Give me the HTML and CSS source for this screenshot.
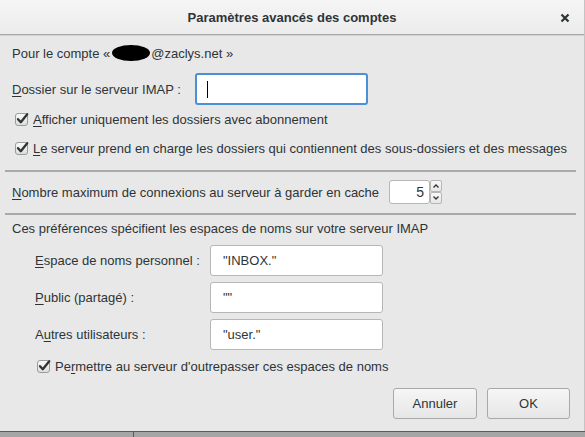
FILE: index.html
```html
<!DOCTYPE html>
<html lang="fr">
<head>
<meta charset="utf-8">
<title>Paramètres avancés des comptes</title>
<link rel="stylesheet" href="styles.css">
</head>
<body>
<div class="window">
  <div class="dialog">
    <header class="titlebar">
      <span class="title">Paramètres avancés des comptes</span>
      <button class="close" aria-label="Fermer">
        <svg width="10" height="10" viewBox="0 0 10 10"><path d="M1.5 1.5 L8.5 8.5 M8.5 1.5 L1.5 8.5" stroke="#2e3436" stroke-width="2.2" fill="none"/></svg>
      </button>
    </header>

    <main class="content">
      <div class="row account">Pour le compte «<span class="redacted"></span>@zaclys.net »</div>

      <div class="row server-dir">
        <label class="label"><u>D</u>ossier sur le serveur IMAP :</label>
        <div class="entry focused"><span class="caret"></span></div>
      </div>

      <label class="check-row first">
        <svg class="check" width="16" height="16" viewBox="0 0 16 16"><defs><linearGradient id="cb1" x1="0" y1="0" x2="0" y2="1"><stop offset="0" stop-color="#fafafa"/><stop offset="1" stop-color="#dcdcdc"/></linearGradient></defs><rect x="1.5" y="2.5" width="12" height="12" rx="2.5" fill="url(#cb1)" stroke="#9b9b9b"/><path d="M4 8.2 L6.8 11.2 L13.2 3.2" stroke="#2e3436" stroke-width="2.3" fill="none" stroke-linecap="round" stroke-linejoin="round"/></svg>
        <span><u>A</u>fficher uniquement les dossiers avec abonnement</span>
      </label>

      <label class="check-row second">
        <svg class="check" width="16" height="16" viewBox="0 0 16 16"><defs><linearGradient id="cb2" x1="0" y1="0" x2="0" y2="1"><stop offset="0" stop-color="#fafafa"/><stop offset="1" stop-color="#dcdcdc"/></linearGradient></defs><rect x="1.5" y="2.5" width="12" height="12" rx="2.5" fill="url(#cb2)" stroke="#9b9b9b"/><path d="M4 8.2 L6.8 11.2 L13.2 3.2" stroke="#2e3436" stroke-width="2.3" fill="none" stroke-linecap="round" stroke-linejoin="round"/></svg>
        <span><u>L</u>e serveur prend en charge les dossiers qui contiennent des sous-dossiers et des messages</span>
      </label>

      <hr class="separator sep1">

      <div class="row cache">
        <label class="label"><u>N</u>ombre maximum de connexions au serveur à garder en cache</label>
        <div class="spin">
          <div class="spin-value">5</div>
          <div class="spin-arrows">
            <span class="arrow"><svg width="8" height="6" viewBox="0 0 8 6"><path d="M1.5 4.5 L4 2 L6.5 4.5" stroke="#2e3436" stroke-width="1.3" fill="none"/></svg></span>
            <span class="arrow"><svg width="8" height="6" viewBox="0 0 8 6"><path d="M1.5 1.5 L4 4 L6.5 1.5" stroke="#2e3436" stroke-width="1.3" fill="none"/></svg></span>
          </div>
        </div>
      </div>

      <hr class="separator sep2">

      <div class="row intro">Ces préférences spécifient les espaces de noms sur votre serveur IMAP</div>

      <div class="namespaces">
        <div class="ns-row">
          <label class="ns-label"><u>E</u>space de noms personnel :</label>
          <div class="entry ns-entry">"INBOX."</div>
        </div>
        <div class="ns-row">
          <label class="ns-label"><u>P</u>ublic (partagé) :</label>
          <div class="entry ns-entry">""</div>
        </div>
        <div class="ns-row">
          <label class="ns-label">A<u>u</u>tres utilisateurs :</label>
          <div class="entry ns-entry">"user."</div>
        </div>
      </div>

      <label class="check-row third">
        <svg class="check" width="16" height="16" viewBox="0 0 16 16"><defs><linearGradient id="cb3" x1="0" y1="0" x2="0" y2="1"><stop offset="0" stop-color="#fafafa"/><stop offset="1" stop-color="#dcdcdc"/></linearGradient></defs><rect x="1.5" y="2.5" width="12" height="12" rx="2.5" fill="url(#cb3)" stroke="#9b9b9b"/><path d="M4 8.2 L6.8 11.2 L13.2 3.2" stroke="#2e3436" stroke-width="2.3" fill="none" stroke-linecap="round" stroke-linejoin="round"/></svg>
        <span>Pe<u>r</u>mettre au serveur d'outrepasser ces espaces de noms</span>
      </label>

      <div class="buttons">
        <button class="btn">Annuler</button>
        <button class="btn">OK</button>
      </div>
    </main>
  </div>
  <div class="taskbar">
    <div class="pane left"></div>
    <div class="pane right"></div>
  </div>
</div>
</body>
</html>
```

FILE: styles.css
```css
* { box-sizing: border-box; }

html, body {
  margin: 0;
  padding: 0;
  background: #a6a6a6;
}

body {
  font-family: "Liberation Sans", Arial, sans-serif;
  font-size: 13px;
  color: #2e3436;
}

.window {
  width: 585px;
  height: 437px;
  display: flex;
  flex-direction: column;
}

.dialog {
  height: 431px;
  background: #e8e8e8;
  border-right: 1px solid #c4c4c4;
  display: flex;
  flex-direction: column;
}

/* title bar */
.titlebar {
  height: 35px;
  flex: none;
  display: flex;
  align-items: center;
  justify-content: center;
  position: relative;
  background: linear-gradient(#f5f5f5, #ececec);
  border-bottom: 1px solid #a9a9a9;
  box-shadow: 0 1px 0 #d2d2d2;
}

.title {
  font-weight: bold;
  font-size: 13px;
  padding-top: 1px;
}

.close {
  position: absolute;
  right: 13px;
  top: 12px;
  width: 12px;
  height: 12px;
  padding: 0;
  border: 0;
  background: none;
  display: flex;
  align-items: center;
  justify-content: center;
}

/* body */
.content {
  flex: 1;
  display: flex;
  flex-direction: column;
  padding: 0 0 0 12px;
}

.row {
  display: flex;
  align-items: center;
}

.account {
  height: 24px;
  margin-top: 6px;
}

.redacted {
  display: inline-block;
  width: 38px;
  height: 16px;
  background: #000;
  border-radius: 50%;
  margin: 0 1px 0 2px;
}

.server-dir {
  height: 32px;
  margin-top: 8px;
}

.label u, .ns-label u, .check-row u {
  text-decoration-thickness: 1px;
  text-underline-offset: 2px;
}

.entry {
  background: #fff;
  border: 1px solid #b6b6b6;
  border-radius: 3px;
  display: flex;
  align-items: center;
}

.server-dir .entry {
  margin-left: 14px;
  width: 173px;
  height: 32px;
  padding-left: 11px;
}

.entry.focused {
  border: 2px solid #4a90d9;
  padding-left: 10px;
}

.caret {
  width: 1px;
  height: 17px;
  background: #000;
}

.check-row {
  display: flex;
  align-items: center;
  height: 20px;
}

.check-row .check {
  flex: none;
  margin-right: 3px;
}

.check-row.first { margin-top: 4px; padding-left: 2px; }
.check-row.second { margin-top: 9px; padding-left: 2px; }

.separator {
  margin: 0 0 0 -7px;
  width: 571px;
  height: 2px;
  border: 0;
  background: #a9a9a9;
}

.sep1 { margin-top: 12px; }
.sep2 { margin-top: 9px; }

.cache {
  height: 24px;
  margin-top: 8px;
}

.spin {
  margin-left: 10px;
  display: flex;
  height: 24px;
}

.spin-value {
  width: 41px;
  height: 24px;
  background: #fff;
  border: 1px solid #b6b6b6;
  border-radius: 3px;
  text-align: right;
  padding-right: 5px;
  line-height: 22px;
  font-size: 14px;
}

.spin-arrows {
  display: flex;
  flex-direction: column;
  width: 12px;
}

.arrow {
  height: 12px;
  display: flex;
  align-items: center;
  justify-content: center;
  background: linear-gradient(#f8f8f8, #e6e6e6);
  border: 1px solid #b6b6b6;
  border-radius: 2px;
}

.intro {
  height: 18px;
  margin-top: 4px;
}

.namespaces {
  display: flex;
  flex-direction: column;
  gap: 6px;
  margin-top: 8px;
  padding-left: 23px;
}

.ns-row {
  display: flex;
  align-items: center;
  height: 31px;
}

.ns-label {
  width: 175px;
  flex: none;
}

.ns-entry {
  width: 173px;
  height: 31px;
  padding-left: 12px;
  padding-bottom: 1px;
}

.check-row.third {
  margin-top: 6px;
  padding-left: 24px;
}

.buttons {
  display: flex;
  justify-content: flex-end;
  gap: 10px;
  margin-top: 12px;
  padding-right: 14px;
}

.btn {
  width: 84px;
  height: 31px;
  font-family: inherit;
  font-size: 13px;
  color: #2e3436;
  background: linear-gradient(#f6f6f6, #e6e6e6);
  border: 1px solid #a9a9a9;
  border-radius: 3px;
  padding: 0;
}

.btn + .btn { width: 83px; }

/* panel strip beneath the dialog */
.taskbar {
  flex: 1;
  display: flex;
  border-top: 1px solid #5a5a5a;
  background: #a6a6a6;
}

.pane.left {
  width: 134px;
  border-right: 1px solid #5a5a5a;
}

.pane.right { flex: 1; }
```
